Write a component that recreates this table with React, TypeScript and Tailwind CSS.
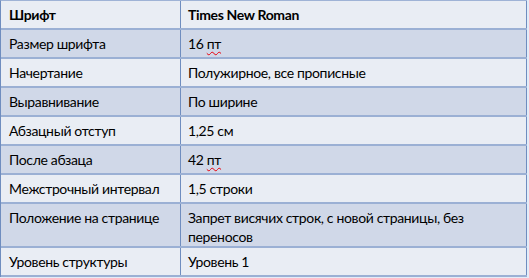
const rows: { label: string; value: string; bold?: boolean; wavy?: boolean; tall?: boolean }[] = [
  { label: "Шрифт", value: "Times New Roman", bold: true },
  { label: "Размер шрифта", value: "16 пт", wavy: true },
  { label: "Начертание", value: "Полужирное, все прописные" },
  { label: "Выравнивание", value: "По ширине" },
  { label: "Абзацный отступ", value: "1,25 см" },
  { label: "После абзаца", value: "42 пт", wavy: true },
  { label: "Межстрочный интервал", value: "1,5 строки" },
  { label: "Положение на странице", value: "Запрет висячих строк, с новой страницы,  без переносов", tall: true },
  { label: "Уровень структуры", value: "Уровень 1" },
]

function Value({ text, wavy }: { text: string; wavy?: boolean }) {
  if (!wavy) return <>{text}</>
  const [num, unit] = text.split(" ")
  return (
    <>
      {num}{" "}
      <span className="underline decoration-wavy decoration-red-600 decoration-1 underline-offset-2">{unit}</span>
    </>
  )
}

export default function App() {
  return (
    <div className="w-[529px] h-[278px] bg-[#e3ecf8] overflow-hidden" style={{ fontFamily: "Lato, 'Noto Sans', sans-serif" }}>
      <div className="w-[527px] border-t border-l border-[#6f8dbf] border-t-[#9fb3d6]">
        {rows.map((row, i) => (
          <div
            key={row.label}
            className={`flex border-b-2 border-[#9bb0d4] text-[14px] tracking-[-0.35px] text-black ${i % 2 === 0 ? "bg-[#e9edf4]" : "bg-[#d0d8e8]"} ${row.tall ? "h-[44px]" : "h-[29px]"}`}
          >
            <div className={`w-[180px] shrink-0 border-r border-[#6f8dbf] pl-[8px] pt-[4px] leading-[19px] ${row.bold ? "font-bold" : ""}`}>
              {row.label}
            </div>
            <div className={`flex-1 border-r border-[#6f8dbf] pl-[7px] pr-4 pt-[4px] leading-[19px] ${row.bold ? "font-bold" : ""}`}>
              <Value text={row.value} wavy={row.wavy} />
            </div>
          </div>
        ))}
      </div>
    </div>
  )
}
